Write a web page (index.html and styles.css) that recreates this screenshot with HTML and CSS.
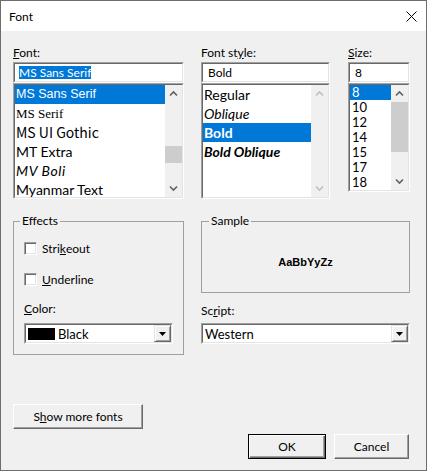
FILE: index.html
```html
<!DOCTYPE html>
<html lang="en">
<head>
    <meta charset="UTF-8">
    <meta name="viewport" content="width=device-width, initial-scale=1.0">
    <title>Font</title>
    <link rel="stylesheet" href="styles.css">
</head>
<body>

    <div class="window">

        <!-- Title bar -->
        <div class="titlebar">
            <span class="title">Font</span>
            <svg class="close" width="11" height="11" viewBox="0 0 11 11">
                <path d="M0.5 0.5 L10.5 10.5 M10.5 0.5 L0.5 10.5" stroke="#000" stroke-width="1" fill="none"/>
            </svg>
        </div>

        <div class="dialog">

            <!-- Font / style / size pickers -->
            <div class="pickers">

                <div class="picker picker-font">
                    <div class="label"><u>F</u>ont:</div>
                    <div class="textbox"><div class="textbox-inner"><span class="selected-text">MS Sans Serif</span></div></div>
                    <div class="listbox list-tall">
                        <div class="listbox-inner">
                            <ul class="items">
                                <li class="item selected f-mssans">MS Sans Serif</li>
                                <li class="item f-msserif">MS Serif</li>
                                <li class="item f-gothic">MS UI Gothic</li>
                                <li class="item">MT Extra</li>
                                <li class="item f-boli">MV Boli</li>
                                <li class="item">Myanmar Text</li>
                            </ul>
                            <div class="scrollbar">
                                <div class="sb-btn">
                                    <svg width="17" height="17" viewBox="0 0 17 17"><path d="M5 10.5 L8.5 7 L12 10.5" stroke="#606060" stroke-width="1.6" fill="none"/></svg>
                                </div>
                                <div class="sb-track"><div class="sb-thumb thumb-font"></div></div>
                                <div class="sb-btn">
                                    <svg width="17" height="17" viewBox="0 0 17 17"><path d="M5 6.5 L8.5 10 L12 6.5" stroke="#606060" stroke-width="1.6" fill="none"/></svg>
                                </div>
                            </div>
                        </div>
                    </div>
                </div>

                <div class="picker picker-style">
                    <div class="label">Font st<u>y</u>le:</div>
                    <div class="textbox"><div class="textbox-inner pad5">Bold</div></div>
                    <div class="listbox list-tall">
                        <div class="listbox-inner">
                            <ul class="items">
                                <li class="item">Regular</li>
                                <li class="item s-oblique">Oblique</li>
                                <li class="item selected s-bold">Bold</li>
                                <li class="item s-bold s-oblique">Bold Oblique</li>
                            </ul>
                            <div class="scrollbar">
                                <div class="sb-btn">
                                    <svg width="17" height="17" viewBox="0 0 17 17"><path d="M5 10.5 L8.5 7 L12 10.5" stroke="#bfbfbf" stroke-width="1.6" fill="none"/></svg>
                                </div>
                                <div class="sb-track"></div>
                                <div class="sb-btn">
                                    <svg width="17" height="17" viewBox="0 0 17 17"><path d="M5 6.5 L8.5 10 L12 6.5" stroke="#bfbfbf" stroke-width="1.6" fill="none"/></svg>
                                </div>
                            </div>
                        </div>
                    </div>
                </div>

                <div class="picker picker-size">
                    <div class="label"><u>S</u>ize:</div>
                    <div class="textbox"><div class="textbox-inner pad5">8</div></div>
                    <div class="listbox list-short">
                        <div class="listbox-inner">
                            <ul class="items items-size">
                                <li class="item selected">8</li>
                                <li class="item">10</li>
                                <li class="item">12</li>
                                <li class="item">14</li>
                                <li class="item">15</li>
                                <li class="item">17</li>
                                <li class="item">18</li>
                            </ul>
                            <div class="scrollbar">
                                <div class="sb-btn">
                                    <svg width="17" height="17" viewBox="0 0 17 17"><path d="M5 10.5 L8.5 7 L12 10.5" stroke="#606060" stroke-width="1.6" fill="none"/></svg>
                                </div>
                                <div class="sb-track"><div class="sb-thumb thumb-size"></div></div>
                                <div class="sb-btn">
                                    <svg width="17" height="17" viewBox="0 0 17 17"><path d="M5 6.5 L8.5 10 L12 6.5" stroke="#606060" stroke-width="1.6" fill="none"/></svg>
                                </div>
                            </div>
                        </div>
                    </div>
                </div>

            </div>

            <!-- Effects / Sample / Script -->
            <div class="groups">

                <fieldset class="group effects">
                    <legend>Effects</legend>
                    <div class="check-row"><span class="checkbox"></span>Stri<u>k</u>eout</div>
                    <div class="check-row"><span class="checkbox"></span><u>U</u>nderline</div>
                    <div class="label color-label"><u>C</u>olor:</div>
                    <div class="combo combo-color">
                        <div class="combo-inner">
                            <span class="swatch"></span>
                            <span class="combo-text">Black</span>
                            <span class="drop-btn">
                                <svg width="7" height="4" viewBox="0 0 7 4"><polygon points="0,0 7,0 3.5,4" fill="#000"/></svg>
                            </span>
                        </div>
                    </div>
                </fieldset>

                <div class="right-col">
                    <fieldset class="group sample">
                        <legend>Sample</legend>
                        <div class="sample-text">AaBbYyZz</div>
                    </fieldset>
                    <div class="label script-label">Sc<u>r</u>ipt:</div>
                    <div class="combo">
                        <div class="combo-inner">
                            <span class="combo-text script-text">Western</span>
                            <span class="drop-btn">
                                <svg width="7" height="4" viewBox="0 0 7 4"><polygon points="0,0 7,0 3.5,4" fill="#000"/></svg>
                            </span>
                        </div>
                    </div>
                </div>

            </div>

            <!-- Buttons -->
            <div class="actions">
                <button class="btn btn-more">S<u>h</u>ow more fonts</button>
                <div class="action-row">
                    <button class="btn btn-default btn-ok">OK</button>
                    <button class="btn btn-cancel">Cancel</button>
                </div>
            </div>

        </div>
    </div>

</body>
</html>
```

FILE: styles.css
```css
/* Base */
* {
    box-sizing: border-box;
}

body {
    margin: 0;
    font-family: Lato, "Noto Sans", sans-serif;
    font-size: 12px;
    color: #000;
    background-color: #f0f0f0;
}

u {
    text-underline-offset: 1px;
}

/* Window frame */
.window {
    width: 427px;
    height: 471px;
    border: 1px solid #6d6d6d;
    background-color: #f0f0f0;
    display: flex;
    flex-direction: column;
}

.titlebar {
    height: 30px;
    flex: none;
    background-color: #fff;
    display: flex;
    align-items: center;
    justify-content: space-between;
    padding: 0 9px 0 8px;
}

.title {
    font-size: 12px;
}

/* Dialog body */
.dialog {
    padding: 14px 16px 0 12px;
}

.label {
    display: block;
    line-height: 15px;
    margin-bottom: 2px;
}

/* Pickers row */
.pickers {
    display: flex;
    align-items: flex-start;
}

.picker-font {
    width: 171px;
}

.picker-style {
    width: 129px;
    margin-left: 17px;
}

.picker-size {
    width: 62px;
    margin-left: 18px;
}

/* Sunken 3D edges */
.textbox,
.listbox,
.combo,
.checkbox {
    border: 1px solid;
    border-color: #a0a0a0 #fff #fff #a0a0a0;
}

.textbox-inner,
.listbox-inner,
.combo-inner {
    height: 100%;
    border: 1px solid;
    border-color: #696969 #e3e3e3 #e3e3e3 #696969;
    background-color: #fff;
}

.textbox {
    height: 21px;
}

.textbox-inner {
    display: flex;
    align-items: center;
    padding-left: 4px;
    white-space: nowrap;
}

.textbox-inner.pad5 {
    padding-left: 5px;
}

.selected-text {
    background-color: #0078d7;
    color: #fff;
    line-height: 13px;
}

/* List boxes */
.list-tall {
    height: 116px;
}

.list-short {
    height: 109px;
}

.listbox-inner {
    display: flex;
    overflow: hidden;
}

.items {
    flex: 1;
    list-style: none;
    margin: 0;
    padding: 0;
    overflow: hidden;
    font-size: 14px;
}

.item {
    height: 19px;
    line-height: 19px;
    padding-left: 1px;
    white-space: nowrap;
}

.item.selected {
    background-color: #0078d7;
    color: #fff;
}

.items-size {
    font-size: 13px;
}

.items-size .item {
    height: 15px;
    line-height: 15px;
    padding-left: 2px;
}

/* font list entries drawn in their own face */
.f-mssans {
    font-family: "Liberation Sans", sans-serif;
    font-size: 12.5px;
}

.f-msserif {
    font-family: "Liberation Serif", serif;
    font-size: 13px;
}

.f-gothic {
    font-family: "Noto Sans CJK JP", sans-serif;
    font-size: 14px;
}

.f-boli {
    font-style: italic;
    letter-spacing: 0.6px;
}

.s-oblique {
    font-style: italic;
}

.s-bold {
    font-weight: bold;
}

/* Scrollbar */
.scrollbar {
    width: 17px;
    flex: none;
    display: flex;
    flex-direction: column;
    background-color: #f0f0f0;
}

.sb-btn {
    height: 17px;
    flex: none;
    display: flex;
}

.sb-track {
    flex: 1;
}

.sb-thumb {
    background-color: #cdcdcd;
}

.thumb-font {
    margin-top: 44px;
    height: 17px;
}

.thumb-size {
    height: 50px;
}

/* Group boxes */
.groups {
    display: flex;
    align-items: flex-start;
    margin-top: 15px;
}

.group {
    margin: 0;
    min-width: 0;
    border: 1px solid #a0a0a0;
}

.group legend {
    line-height: 14px;
    padding: 0 2px;
}

.effects {
    width: 171px;
    padding: 13px 0 10px 10px;
}

.effects legend {
    margin-left: -4px;
}

.check-row {
    display: flex;
    align-items: center;
    height: 15px;
}

.check-row + .check-row {
    margin-top: 16px;
}

.checkbox {
    width: 13px;
    height: 13px;
    margin-right: 5px;
    background-color: #fff;
    box-shadow: inset 1px 1px 0 #696969, inset -1px -1px 0 #e3e3e3;
}

.color-label {
    margin-top: 14px;
    margin-bottom: 7px;
}

.right-col {
    width: 209px;
    margin-left: 17px;
}

.sample {
    padding: 0;
}

.sample legend {
    margin-left: 7px;
}

.sample-text {
    height: 64px;
    padding-top: 4px;
    display: flex;
    align-items: center;
    justify-content: center;
    font-family: "Liberation Sans", sans-serif;
    font-weight: bold;
    font-size: 11px;
}

.script-label {
    margin-top: 10px;
    margin-bottom: 5px;
}

/* Combo boxes */
.combo {
    height: 21px;
}

.combo-color {
    width: 149px;
}

.combo-inner {
    display: flex;
    align-items: center;
}

.swatch {
    width: 27px;
    height: 12px;
    margin-left: 2px;
    background-color: #000;
}

.combo-text {
    flex: 1;
    margin-left: 3px;
    font-size: 13px;
}

.script-text {
    margin-left: 2px;
}

.drop-btn {
    width: 17px;
    height: 17px;
    display: flex;
    align-items: center;
    justify-content: center;
    background-color: #f0f0f0;
    border: 1px solid;
    border-color: #e3e3e3 #696969 #696969 #e3e3e3;
    box-shadow: inset 1px 1px 0 #fff, inset -1px -1px 0 #a0a0a0;
}

/* Push buttons */
.actions {
    margin-top: 49px;
}

.btn {
    height: 25px;
    padding: 0;
    font-family: Lato, "Noto Sans", sans-serif;
    font-size: 12px;
    color: #000;
    background-color: #f0f0f0;
    border: 1px solid;
    border-color: #fff #696969 #696969 #fff;
    box-shadow: inset -1px -1px 0 #a0a0a0;
}

.btn-more {
    width: 130px;
}

.action-row {
    display: flex;
    justify-content: flex-end;
    gap: 8px;
    margin-top: 5px;
    padding-right: 1px;
}

.btn-ok {
    width: 78px;
}

.btn-cancel {
    width: 75px;
}

.btn-default {
    border: 1px solid #000;
    box-shadow: inset 1px 1px 0 #fff, inset -1px -1px 0 #696969, inset -2px -2px 0 #a0a0a0;
}
```
